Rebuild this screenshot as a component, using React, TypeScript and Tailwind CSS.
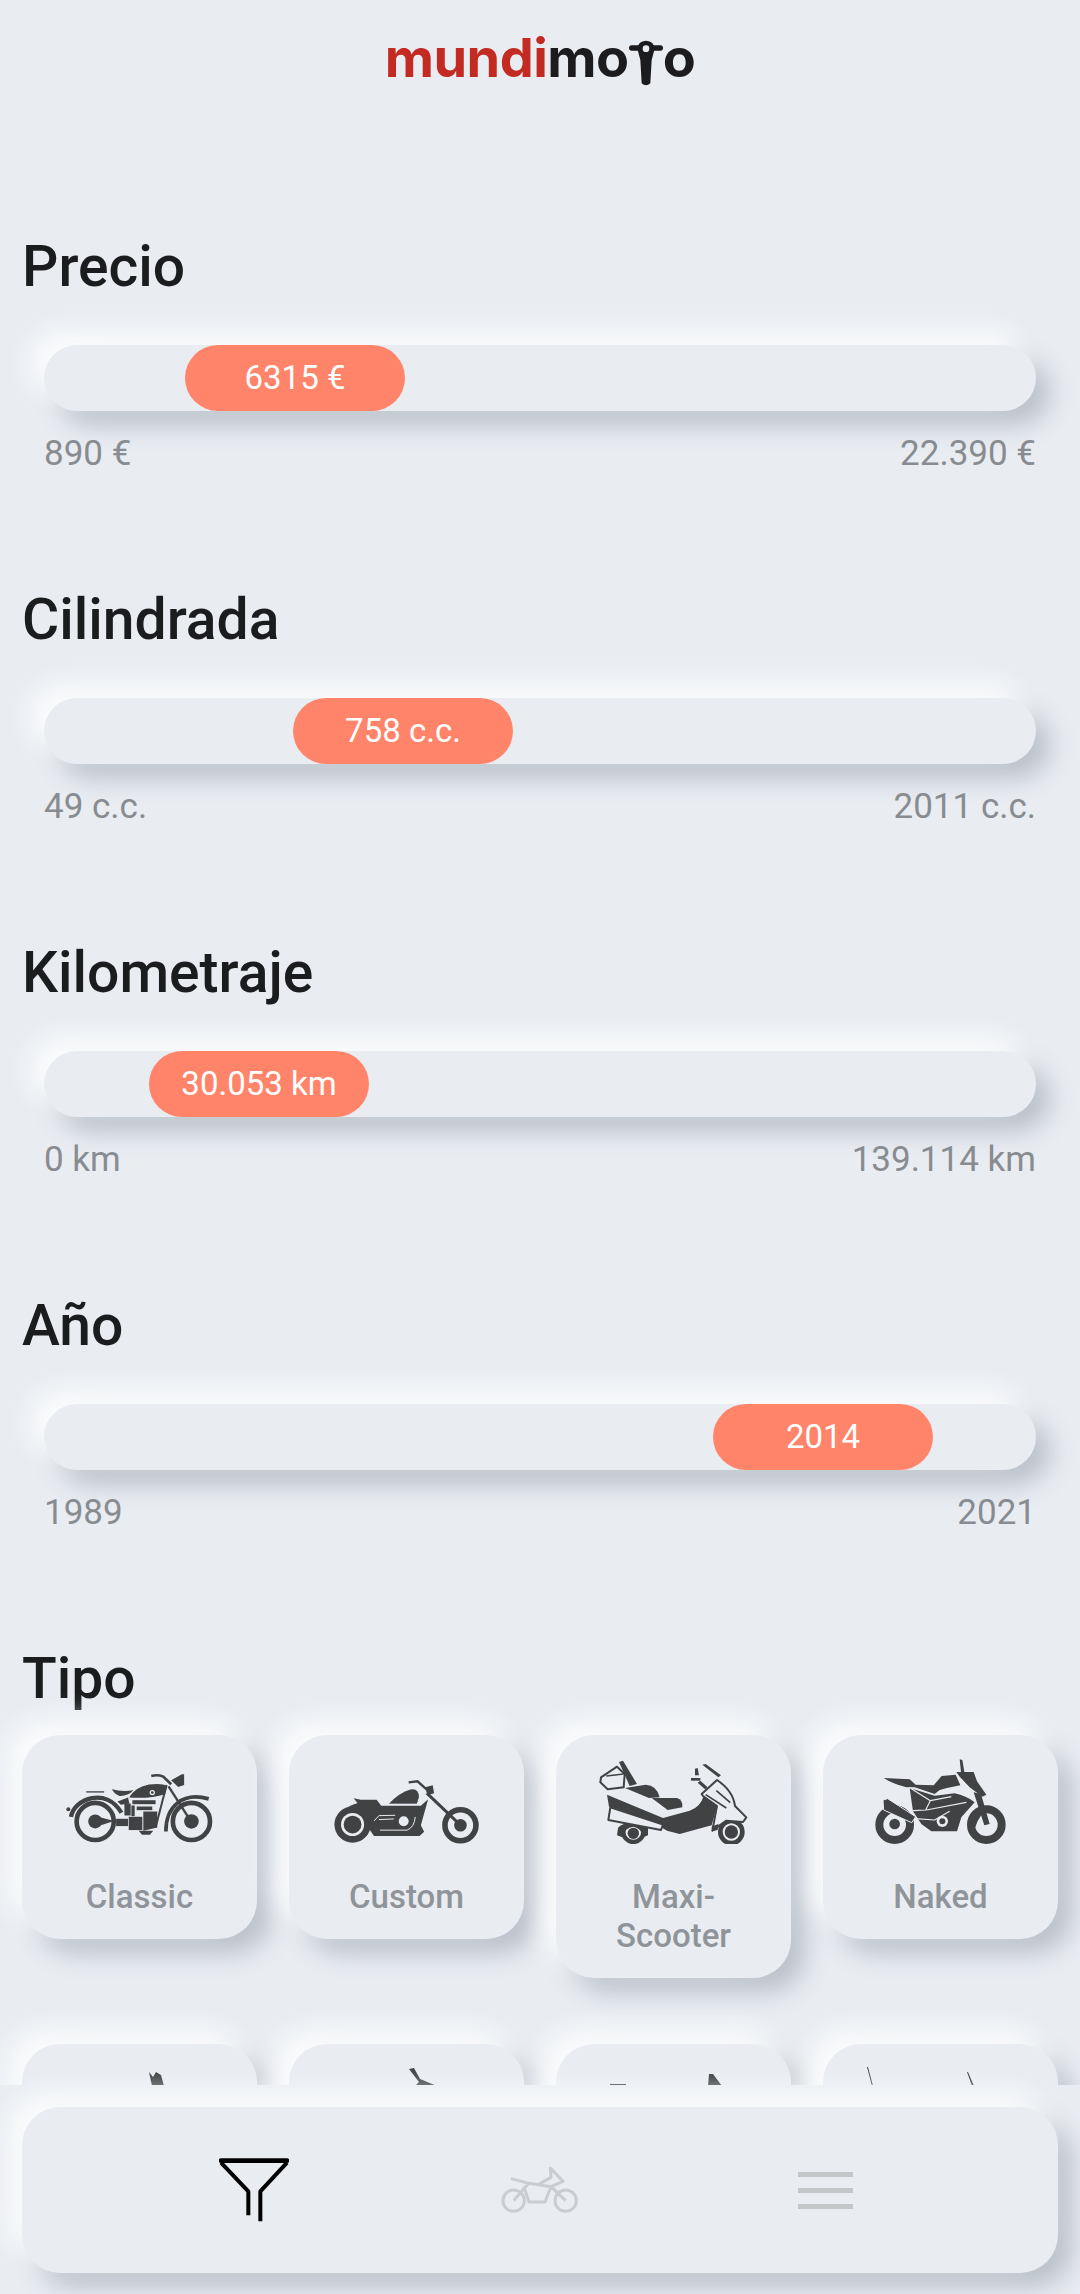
import React from 'react';

const DARK = '#404244';
const BG = '#e9edf2';

const neu = 'bg-[#e9edf2] shadow-[-14px_-14px_26px_#fbfcfd,14px_14px_26px_#b9bfc8]';

const ClassicIcon = () => (
  <svg width="152" height="73" viewBox="70 58 456 220" fill={DARK}>
    <circle cx="163" cy="210" r="56" fill="none" stroke={DARK} strokeWidth="14" />
    <circle cx="163" cy="210" r="21" />
    <path d="M175 197 L220 209 L175 223 Z" />
    <circle cx="453" cy="210" r="56" fill="none" stroke={DARK} strokeWidth="14" />
    <circle cx="453" cy="210" r="22" />
    <path d="M90 196 C100 140 198 106 242 184" fill="none" stroke={DARK} strokeWidth="13" />
    <path d="M136 121 H190" stroke={DARK} strokeWidth="4" />
    <circle cx="82" cy="173" r="6" />
    <path d="M213 113 Q245 122 278 116 Q262 134 236 133 Q222 128 213 113 Z" />
    <path d="M265 138 Q285 106 325 99 Q365 94 380 104 L374 128 Q330 142 265 138 Z" />
    <circle cx="335" cy="123" r="8" fill={BG} />
    <circle cx="335" cy="123" r="4" />
    <path d="M332 73 Q352 68 368 75 L392 98" fill="none" stroke={DARK} strokeWidth="8" />
    <path d="M392 86 L424 68 L431 68 L431 100 L413 106 Z" />
    <path d="M384 104 L453 212" stroke={DARK} strokeWidth="7" />
    <path d="M378 100 L345 228" stroke={DARK} strokeWidth="6" />
    <path d="M376 240 C376 165 425 120 505 142" fill="none" stroke={DARK} strokeWidth="11" />
    <path d="M230 150 L262 138 L266 156 L240 160 Z" />
    <path d="M251 156 H270 V192 H251 Z" />
    <path d="M275 146 H345 V158 H275 Z" />
    <path d="M288 165 H335 V176 H288 Z" />
    <path d="M272 162 H282 V194 H272 Z" />
    <path d="M264 196 H305 V236 H264 Z" />
    <path d="M308 180 H350 L350 228 L308 238 Z" />
    <path d="M294 238 H338 L328 250 H304 Z" />
    <path d="M226 202 H262 V224 H226 Z" />
  </svg>
);

const CustomIcon = () => (
  <svg width="146" height="64" viewBox="70 88 440 194" fill={DARK}>
    <circle cx="125" cy="223" r="55" />
    <circle cx="125" cy="223" r="35" fill={BG} />
    <circle cx="125" cy="223" r="27" />
    <circle cx="452" cy="225" r="47" fill="none" stroke={DARK} strokeWidth="17" />
    <circle cx="452" cy="225" r="19" />
    <path d="M350 128 L452 225" stroke={DARK} strokeWidth="9" />
    <path d="M295 95 L322 92 L362 128" fill="none" stroke={DARK} strokeWidth="7" />
    <path d="M345 110 L368 104 L372 128 L352 134 Z" />
    <path d="M235 160 Q268 126 300 117 Q326 112 326 140 L320 160 Z" />
    <path d="M128 143 L150 148 L198 148 L212 166 L332 166 L354 146 L332 225 L342 245 L328 258 L190 258 L178 240 L172 205 Q155 170 112 168 L140 158 Z" />
    <path d="M190 212 L205 196 L254 195 M205 208 L250 206 M208 240 L290 240 Q312 232 315 200" fill="none" stroke={BG} strokeWidth="3" />
    <circle cx="280" cy="213" r="15" fill={BG} />
    <path d="M232 162 H322 L330 140" fill="none" stroke={BG} strokeWidth="3" />
  </svg>
);

const MaxiIcon = () => (
  <svg width="150" height="84" viewBox="58 58 450 252" fill={DARK}>
    <circle cx="161" cy="274" r="30" fill={BG} stroke={DARK} strokeWidth="13" />
    <circle cx="161" cy="278" r="17" />
    <path d="M115 262 Q125 248 160 244 L205 262 L205 284 L190 290 Q186 262 161 258 Q135 260 128 290 L112 284 Z" />
    <circle cx="455" cy="274" r="33" fill={BG} stroke={DARK} strokeWidth="14" />
    <circle cx="455" cy="274" r="20" />
    <path d="M64 110 L112 78 L135 100 L132 140 L84 146 L62 125 Z" fill={BG} stroke={DARK} strokeWidth="6" strokeLinejoin="round" />
    <path d="M80 106 L132 100" stroke={DARK} strokeWidth="5" />
    <path d="M118 64 L130 60 L172 130 L150 136 Z" />
    <path d="M136 142 L198 132 Q232 134 240 170 L208 172 Z" />
    <path d="M216 172 L292 172 Q310 178 308 200 L264 208 Z" />
    <path d="M82 162 L250 232 L330 210 Q362 200 372 166 L412 196 L396 254 L300 280 L262 270 L232 252 Q150 214 88 198 Z" />
    <path d="M92 200 L250 252 L244 268 L86 238 Z" fill={BG} stroke={DARK} strokeWidth="6" strokeLinejoin="round" />
    <path d="M366 160 L412 118 Q460 150 466 196 L500 230 L490 244 L440 240 L398 270 L412 196 L370 166 Z" fill={BG} stroke={DARK} strokeWidth="6" strokeLinejoin="round" />
    <path d="M410 150 L452 186 M378 162 L440 202" stroke={DARK} strokeWidth="5" />
    <path d="M368 72 L378 70 L424 104 L416 110 Z" />
    <path d="M346 84 L354 82 L358 104 L346 104 Z" />
    <path d="M334 112 H362 V120 H334 Z" />
    <path d="M362 120 L384 140 L376 146 L354 126 Z" />
    <path d="M396 258 L416 250 L414 268 L398 272 Z" />
  </svg>
);

const NakedIcon = () => (
  <svg width="132" height="86" viewBox="46 52 396 258" fill={DARK}>
    <circle cx="105" cy="252" r="46" fill="none" stroke={DARK} strokeWidth="24" />
    <circle cx="105" cy="250" r="16" />
    <circle cx="380" cy="252" r="46" fill="none" stroke={DARK} strokeWidth="24" />
    <path d="M72 112 L150 116 L168 132 L222 134 L246 106 L288 102 L302 134 L262 142 L240 148 L225 160 L165 140 L140 140 Q100 130 72 112 Z" />
    <path d="M150 142 L225 165 L285 158 Q320 165 345 185 L305 230 L292 272 L215 272 L185 250 L160 212 Z" />
    <path d="M148 140 L212 180 L198 208 L160 210 M212 180 L275 168 M200 208 L320 185 M165 234 L225 238 L270 212" fill="none" stroke={BG} strokeWidth="3.5" />
    <path d="M70 178 L84 174 L168 228 L156 246 L72 208 Z" stroke={BG} strokeWidth="3" />
    <circle cx="248" cy="242" r="17" fill={BG} />
    <circle cx="248" cy="242" r="9" />
    <path d="M300 56 L308 58 L314 94 L304 94 Z" />
    <path d="M290 94 H342 L352 122 L380 162 L368 168 L330 140 L300 108 Z" />
    <path d="M342 155 L364 160 L390 250 L374 254 Z" />
    <path d="M330 256 Q340 212 378 196 L398 198 Q360 214 346 262 Z" />
  </svg>
);

// second row, only the top of each drawing shows above the bottom bar
const glimpses = [
  <path key="a" d="M104 5 L108 10 L111 5 L116 8 L119 19 H107 Z" />,
  <path key="b" d="M97 2 L102 1 L108 12 L125 19 H103 L107 15 Z" />,
  <g key="c">
    <path d="M31 17 H47 V19 H31 Z" />
    <path d="M130 7 L134 7 L143 19 H129 Z" />
  </g>,
  <g key="d">
    <path d="M21 0 L22 0 L27 19 H26 Z" />
    <path d="M121 5 L122 5 L128 19 H126 Z" />
  </g>,
];

const tipos = [
  { name: 'Classic', icon: <ClassicIcon /> },
  { name: 'Custom', icon: <CustomIcon /> },
  { name: 'Maxi-Scooter', icon: <MaxiIcon /> },
  { name: 'Naked', icon: <NakedIcon /> },
];

const sliders = [
  { title: 'Precio', value: '6315 €', min: '890 €', max: '22.390 €', offset: 'ml-[141px]' },
  { title: 'Cilindrada', value: '758 c.c.', min: '49 c.c.', max: '2011 c.c.', offset: 'ml-[249px]' },
  { title: 'Kilometraje', value: '30.053 km', min: '0 km', max: '139.114 km', offset: 'ml-[105px]' },
  { title: 'Año', value: '2014', min: '1989', max: '2021', offset: 'ml-[669px]' },
];

const Logo = () => (
  <div className="flex h-[234px] justify-center pt-[20px]">
    <div className="flex h-[80px] items-start font-['Inter',sans-serif] text-[54px] leading-[76px] font-bold tracking-[-0.5px]">
      <span className="text-[#c32a22]">mundi</span>
      <span className="text-[#1c1c1e]">mo</span>
      <svg width="34" height="46" viewBox="0 0 102 138" className="mt-[20px]" fill="#1c1c1e">
        <path d="M8 24 H94" stroke="#1c1c1e" strokeWidth="16" strokeLinecap="round" />
        <path d="M26 30 Q24 4 51 2 Q78 4 76 30 L68 60 L64 130 Q51 142 38 130 L34 60 Z" />
        <circle cx="51" cy="26" r="10" fill="#e9edf2" />
      </svg>
      <span className="text-[#1c1c1e]">o</span>
    </div>
  </div>
);

export default function App() {
  return (
    <div className="relative h-[2294px] overflow-hidden bg-[#e9edf2] font-['Roboto',sans-serif]">
      <Logo />

      <div className="flex flex-col gap-[113px] px-[22px]">
        {sliders.map((s) => (
          <section key={s.title}>
            <h2 className="text-[57px] leading-[66px] font-medium text-[#1a1c1e]">{s.title}</h2>
            <div className="mx-[22px] mt-[45px]">
              <div className={`h-[66px] rounded-full ${neu}`}>
                <div
                  className={`flex h-[66px] w-[220px] items-center justify-center rounded-full bg-[#ff8469] text-[33px] text-white ${s.offset}`}
                >
                  {s.value}
                </div>
              </div>
              <div className="mt-[23px] flex justify-between text-[35px] leading-[40px] text-[#888c90]">
                <span>{s.min}</span>
                <span>{s.max}</span>
              </div>
            </div>
          </section>
        ))}
      </div>

      <div className="mt-[113px] px-[22px]">
        <h2 className="text-[57px] leading-[66px] font-medium text-[#1a1c1e]">Tipo</h2>
        <div className="mt-[23px] grid grid-cols-4 items-start gap-x-[32px] gap-y-[66px]">
          {tipos.map((t) => (
            <div key={t.name} className={`flex flex-col items-center rounded-[38px] p-[23px] ${neu}`}>
              <div className="flex h-[86px] items-end">{t.icon}</div>
              <span className="mt-[33px] text-center text-[33px] leading-[39px] font-medium text-[#8f9499]">
                {t.name}
              </span>
            </div>
          ))}
          {glimpses.map((g, i) => (
            <div key={i} className={`h-[203px] rounded-[38px] p-[23px] ${neu}`}>
              <svg width="189" height="86" viewBox="0 0 189 86" fill={DARK}>
                {g}
              </svg>
            </div>
          ))}
        </div>
      </div>

      {/* Bottom bar */}
      <div className="absolute inset-x-0 bottom-0 h-[209px] bg-[#e9edf2] px-[22px] pt-[22px]">
        <nav className={`flex h-[166px] items-center rounded-[38px] pl-[197px] ${neu}`}>
          <svg width="70" height="64" viewBox="0 0 210 192" fill="none" stroke="#000" strokeWidth="12">
            <path d="M6 8 H204" strokeWidth="14" strokeLinecap="round" />
            <path d="M6 14 L88 100 V172" strokeLinejoin="round" />
            <path d="M204 14 L124 100 V190" strokeLinejoin="round" />
          </svg>
          <svg width="78" height="48" viewBox="0 0 234 144" fill="none" stroke="#c9ccd0" strokeWidth="9" strokeLinejoin="round" className="ml-[212px]">
            <circle cx="38" cy="104" r="32" />
            <circle cx="194" cy="104" r="32" />
            <path d="M38 104 L70 66 L84 108 H132 L150 62 L194 104" />
            <path d="M30 38 L84 52 L70 66 M84 52 L112 56 L150 34 L148 6 L186 46 L150 62 L112 56" />
          </svg>
          <div className="ml-[219px] flex flex-col gap-[11px]">
            <div className="h-[5px] w-[55px] bg-[#c4c6c8]" />
            <div className="h-[5px] w-[55px] bg-[#c4c6c8]" />
            <div className="h-[5px] w-[55px] bg-[#c4c6c8]" />
          </div>
        </nav>
      </div>
    </div>
  );
}
